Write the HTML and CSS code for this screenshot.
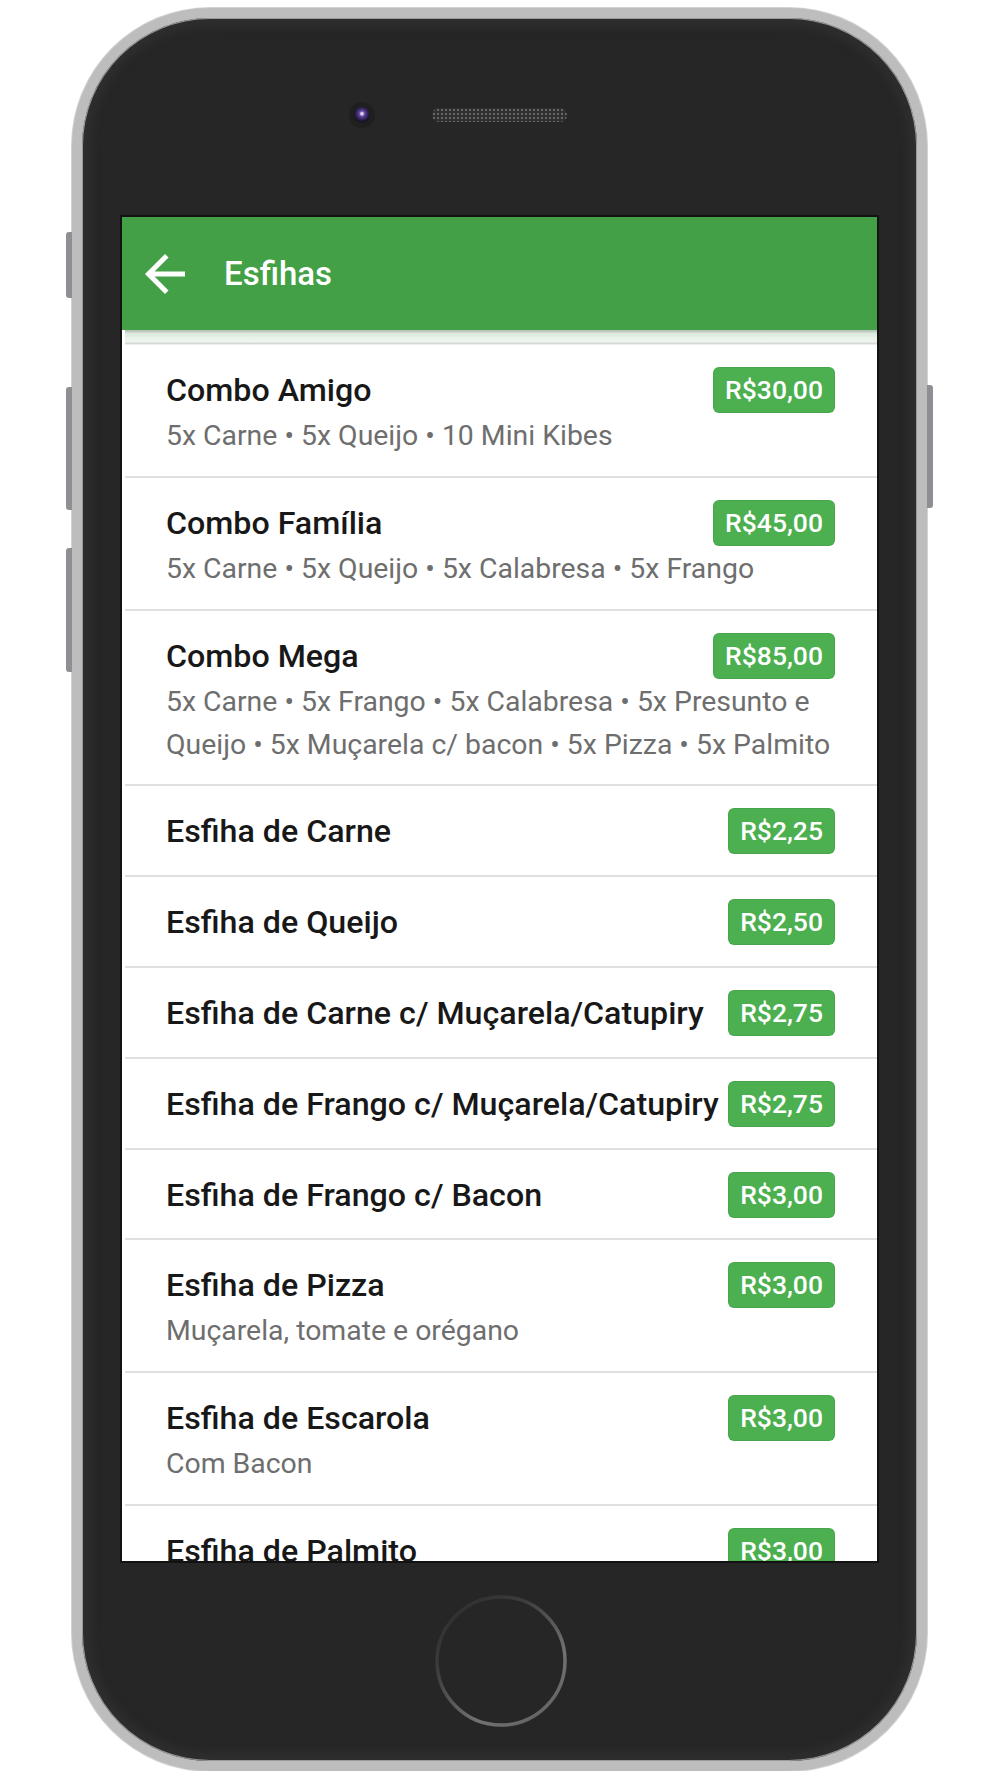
FILE: index.html
```html
<!DOCTYPE html>
<html lang="pt-BR">
<head>
<meta charset="utf-8">
<title>Esfihas</title>
<link rel="stylesheet" href="styles.css">
</head>
<body>
<div class="phone">
  <span class="side-btn left b1"></span>
  <span class="side-btn left b2"></span>
  <span class="side-btn left b3"></span>
  <span class="side-btn right b4"></span>

  <div class="bezel-top">
    <span class="camera"></span>
    <span class="speaker"></span>
  </div>

  <div class="screen">
    <header class="appbar">
      <svg class="back" viewBox="0 0 24 24" width="60" height="60" aria-hidden="true">
        <path fill="#ffffff" d="M20 11H7.83l5.59-5.59L12 4l-8 8 8 8 1.41-1.41L7.83 13H20v-2z"/>
      </svg>
      <h1 class="title">Esfihas</h1>
    </header>
    <div class="appbar-shade"></div>

    <ul class="menu">
      <li class="item">
        <span class="name">Combo Amigo</span>
        <span class="price">R$30,00</span>
        <p class="desc">5x Carne • 5x Queijo • 10 Mini Kibes</p>
      </li>
      <li class="item">
        <span class="name">Combo Família</span>
        <span class="price">R$45,00</span>
        <p class="desc">5x Carne • 5x Queijo • 5x Calabresa • 5x Frango</p>
      </li>
      <li class="item">
        <span class="name">Combo Mega</span>
        <span class="price">R$85,00</span>
        <p class="desc">5x Carne • 5x Frango • 5x Calabresa • 5x Presunto e Queijo • 5x Muçarela c/ bacon • 5x Pizza • 5x Palmito</p>
      </li>
      <li class="item">
        <span class="name">Esfiha de Carne</span>
        <span class="price">R$2,25</span>
      </li>
      <li class="item">
        <span class="name">Esfiha de Queijo</span>
        <span class="price">R$2,50</span>
      </li>
      <li class="item">
        <span class="name">Esfiha de Carne c/ Muçarela/Catupiry</span>
        <span class="price">R$2,75</span>
      </li>
      <li class="item">
        <span class="name">Esfiha de Frango c/ Muçarela/Catupiry</span>
        <span class="price">R$2,75</span>
      </li>
      <li class="item">
        <span class="name">Esfiha de Frango c/ Bacon</span>
        <span class="price">R$3,00</span>
      </li>
      <li class="item">
        <span class="name">Esfiha de Pizza</span>
        <span class="price">R$3,00</span>
        <p class="desc">Muçarela, tomate e orégano</p>
      </li>
      <li class="item">
        <span class="name">Esfiha de Escarola</span>
        <span class="price">R$3,00</span>
        <p class="desc">Com Bacon</p>
      </li>
      <li class="item">
        <span class="name">Esfiha de Palmito</span>
        <span class="price">R$3,00</span>
      </li>
    </ul>
  </div>

  <div class="bezel-bottom">
    <svg class="home" viewBox="0 0 136 136" width="136" height="136" aria-hidden="true">
      <defs>
        <linearGradient id="ring" x1="0.1" y1="0" x2="0.9" y2="1">
          <stop offset="0" stop-color="#2c2c2c"/>
          <stop offset="0.3" stop-color="#3c3c3c"/>
          <stop offset="0.7" stop-color="#727272"/>
          <stop offset="1" stop-color="#606060"/>
        </linearGradient>
      </defs>
      <circle cx="68" cy="68" r="64" fill="none" stroke="url(#ring)" stroke-width="3.5"/>
    </svg>
  </div>
</div>
</body>
</html>
```

FILE: styles.css
```css
* {
  box-sizing: border-box;
}

html, body {
  margin: 0;
  padding: 0;
  background: #ffffff;
}

body {
  font-family: Roboto, "Noto Sans", "Liberation Sans", sans-serif;
}

.phone {
  position: relative;
  width: 855px;
  height: 1763px;
  margin: 8px 0 0 72px;
  border: 10px solid #bdbdbd;
  border-radius: 138px;
  background: #262626;
  padding: 0 40px;
  box-shadow: inset 0 0 0 1px #9a9a9a, inset 0 0 8px 9px #2e2e2e, 0 0 0 1px #d2d2d2;
}

.side-btn {
  position: absolute;
  width: 6px;
  background: #8e8e93;
}

.side-btn.left {
  left: -16px;
  border-radius: 3px 0 0 3px;
}

.side-btn.right {
  right: -16px;
  border-radius: 0 3px 3px 0;
}

.b1 { top: 214px; height: 66px; }
.b2 { top: 369px; height: 123px; }
.b3 { top: 530px; height: 124px; }
.b4 { top: 367px; height: 123px; }

.bezel-top {
  height: 199px;
  display: flex;
  align-items: center;
  padding-bottom: 6px;
}

.camera {
  width: 16px;
  height: 16px;
  margin-left: 232px;
  border-radius: 50%;
  background: radial-gradient(circle at 50% 42%, #d8d0ec 0, #d8d0ec 1.2px, #6a4aa8 2.6px, #3c2a6c 5px, #16141f 8px);
  box-shadow: 0 0 0 5px rgba(0, 0, 0, 0.18);
}

.speaker {
  width: 135px;
  height: 14px;
  margin-left: 62px;
  border-radius: 7px;
  background-color: #2e2e2e;
  background-image: radial-gradient(circle, #666666 0, #666666 1.1px, transparent 1.6px);
  background-size: 4px 4px;
}

.screen {
  height: 1344px;
  background: #ffffff;
  overflow: hidden;
  box-shadow: 0 0 0 2px #121212;
}

.appbar {
  height: 113px;
  background: #43a047;
  display: flex;
  align-items: center;
}

.back {
  display: block;
  margin-left: 13px;
  flex: none;
}

.title {
  margin: 0 0 0 29px;
  font-family: Roboto, "Noto Sans", sans-serif;
  font-weight: 500;
  font-size: 33px;
  color: #ffffff;
  letter-spacing: 0;
}

.appbar-shade {
  height: 15px;
  margin-left: 3px;
  background: linear-gradient(to bottom,
    #b9c2b9 0, #c4ccc4 2px, #dbe8db 3px, #e9f2e9 8px, #eef5ee 12px,
    #d6d6d6 13px, #dadada 14px, #ffffff 15px);
}

.menu {
  list-style: none;
  margin: 0;
  padding: 0;
}

.item {
  display: grid;
  grid-template-columns: 1fr auto;
  align-items: start;
  padding: 24px 43px 22.8px 41px;
  margin-left: 3px;
  border-bottom: 2px solid #e0e0e0;
}

.name {
  font-weight: 500;
  font-size: 32.2px;
  line-height: 42px;
  color: #181818;
  white-space: nowrap;
}

.price {
  margin: -1px 0 -3px;
  height: 44px;
  line-height: 44px;
  padding: 0 11px;
  border-radius: 5px;
  background: #4caf50;
  color: #ffffff;
  font-weight: 500;
  font-size: 26.5px;
  box-shadow: 0 0 0 1px #47a64b;
}

.desc {
  grid-column: 1 / -1;
  margin: 3px 0 -4px;
  font-weight: 400;
  font-size: 28.4px;
  line-height: 43px;
  color: #6e6e6e;
}

.bezel-bottom {
  height: 199px;
  display: flex;
  align-items: center;
  justify-content: center;
}

.home {
  display: block;
  margin-left: 3px;
}
```
